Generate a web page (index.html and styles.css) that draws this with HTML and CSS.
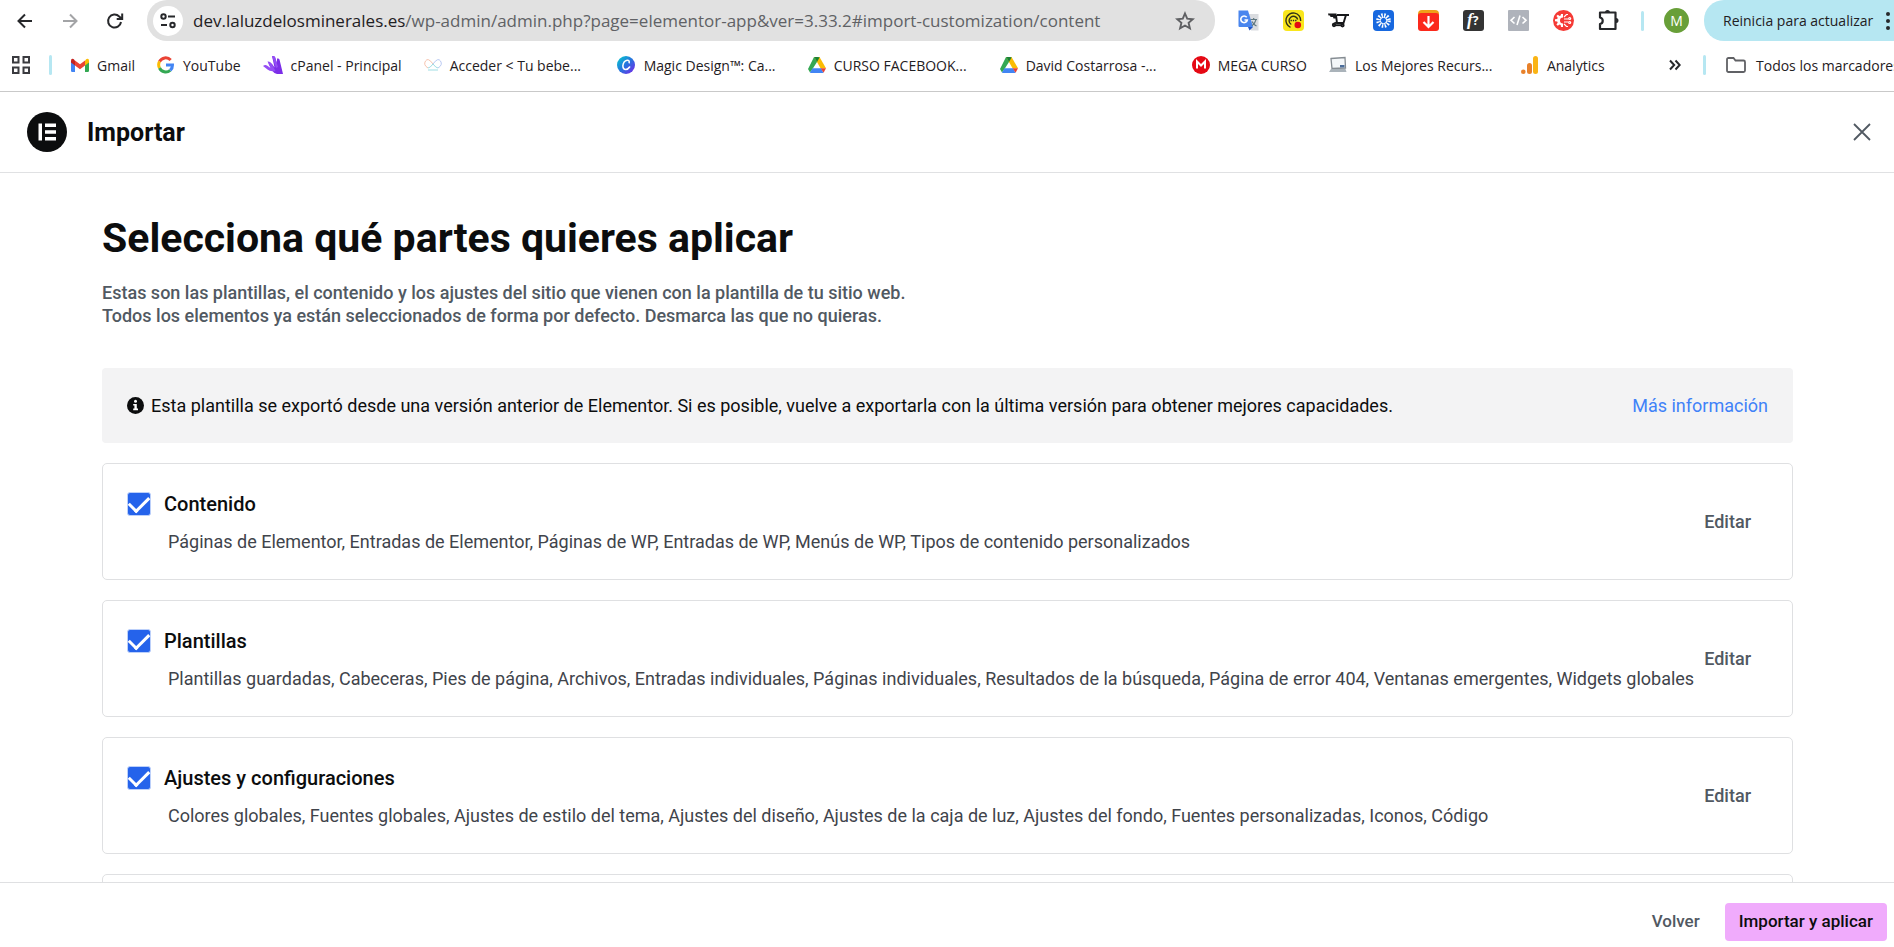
FILE: index.html
```html
<!DOCTYPE html>
<html lang="es">
<head>
<meta charset="utf-8">
<title>Importar</title>
<link rel="stylesheet" href="styles.css">
</head>
<body>
<svg class="defs" aria-hidden="true">
  <symbol id="drive" viewBox="0 0 18 16">
    <path fill="#34a853" d="M6 0h3.200L12 5 9 5 4.500 12 2 15.500 0 12Z"/>
    <path fill="#fbbc04" d="M6.500 0h5L18 11.200h-5.500L9 5Z"/>
    <path fill="#188038" d="M6.500 0H9L11.700 .3 9 5Z"/>
    <path fill="#4285f4" d="M4.600 11.200h8.600L15.500 16H2.500L2 15.400Z"/>
    <path fill="#ea4335" d="M12.700 11.200H18L15.600 15.700Z"/>
  </symbol>
</svg>

<header class="browser">
  <div class="toolbar">
    <button class="nav" aria-label="Atrás"><svg width="20" height="20" viewBox="0 0 20 20" fill="none" stroke="#27282b" stroke-width="2"><path d="M17 10H4M10 3.500 3.500 10 10 16.500"/></svg></button>
    <button class="nav" aria-label="Adelante"><svg width="20" height="20" viewBox="0 0 20 20" fill="none" stroke="#a3a4a6" stroke-width="2"><path d="M3 10h13M10 3.500 16.500 10 10 16.500"/></svg></button>
    <button class="nav" aria-label="Recargar"><svg width="20" height="20" viewBox="0 0 20 20" fill="none" stroke="#27282b" stroke-width="2"><path d="M16 11a6.500 6.500 0 1 1-1.800-5.500L17 8M17.200 2.500V8h-5.500"/></svg></button>
    <div class="address">
      <button class="site" aria-label="Información del sitio"><svg width="16" height="16" viewBox="0 0 16 16" fill="none" stroke="#27282b" stroke-width="2"><circle cx="3.500" cy="3.500" r="2.200"/><path d="M8 3.500h7M1 12h6"/><circle cx="12.500" cy="12" r="2.200"/></svg></button>
      <span class="url">dev.laluzdelosminerales.es<span class="path">/wp-admin/admin.php?page=elementor-app&amp;ver=3.33.2#import-customization/content</span></span>
      <button class="star" aria-label="Añadir a marcadores"><svg width="20" height="20" viewBox="0 0 20 20" fill="none" stroke="#5f6063" stroke-width="1.900"><path d="m10 2.500 2.200 5.200 5.600.5-4.200 3.700 1.300 5.500L10 14.500l-4.900 2.900 1.300-5.500L2.200 8.200l5.600-.5Z"/></svg></button>
    </div>
    <div class="extensions">
      <button aria-label="Traductor"><svg viewBox="0 0 21 21"><path fill="#dadce0" d="M9 4h11.500v16.500H13Z"/><path fill="#4a86ee" d="M.5.500H10L15 17H1.500Q.5 17 .5 16Z"/><path fill="#2457c5" d="M10 17h5l-3.500 3.500Z"/><path d="M8.700 7.300A3.300 3.300 0 1 0 9.300 10H6.500" fill="none" stroke="#fff" stroke-width="1.600"/><path d="M12.500 9.500H19M15.700 8v1.500M18 9.700q-1 4-4 6M14 11.500q1.500 3 4.500 4.500" fill="none" stroke="#5f7780" stroke-width="1.200"/></svg></button>
      <button aria-label="Captura"><svg viewBox="0 0 21 21"><rect width="21" height="21" rx="4" fill="#f9e61c"/><g fill="none" stroke="#303018" stroke-width="1.400"><path d="M7.500 17.300A7.400 7.400 0 1 1 17.700 11"/><path d="M8.300 14.500A4.400 4.400 0 1 1 14.700 9.500"/></g><path d="M7.500 10.500h6" stroke="#303018" stroke-width="1.400" stroke-dasharray="1.400 .9"/><circle cx="14.800" cy="15" r="3.300" fill="#e30b13"/></svg></button>
      <button aria-label="Carrito"><svg viewBox="0 0 21 21"><path fill="#17181a" d="M0 3.500h8.500l.5 5H5.500L5 7H2.500L2 5.500H.5Z"/><g fill="none" stroke="#17181a" stroke-width="1.900"><path d="M8 5 9 13h6.500L18 5h3M9 5h8.500M8 12.500 5.500 14"/><circle cx="6" cy="15" r="1.200"/><circle cx="14.500" cy="15.300" r="1.200"/><path d="M7 15.200h6"/></g></svg></button>
      <button aria-label="Destello"><svg viewBox="0 0 21 21"><rect width="21" height="21" rx="4" fill="#1768df"/><g fill="none" stroke="#fff"><circle cx="10.500" cy="10.500" r="3.200" stroke-width="1"/><circle cx="10.500" cy="10.500" r="5.200" stroke-width="4.200" stroke-dasharray="1.400 1.323"/></g></svg></button>
      <button aria-label="Descargas"><svg viewBox="0 0 21 21"><rect width="21" height="20" rx="4" fill="#f0a018"/><rect y="3" width="21" height="18" rx="3" fill="#fb291c"/><path d="M10.500 6v11M5.500 12l5 5 5-5" fill="none" stroke="#fff" stroke-width="2.200"/></svg></button>
      <button aria-label="Fuentes"><svg viewBox="0 0 21 21"><rect width="21" height="21" rx="3" fill="#343434"/><text x="4" y="15" class="fx">f<tspan class="mark">?</tspan></text></svg></button>
      <button aria-label="Código"><svg viewBox="0 0 21 21"><rect width="21" height="21" rx="1" fill="#afb3bb"/><path d="M6.500 7 3 10.300l3.500 3.200M14.500 7 18 10.300l-3.500 3.200M12 5.500 9 15" fill="none" stroke="#fff" stroke-width="1.600"/></svg></button>
      <button aria-label="Circuito"><svg viewBox="0 0 21 21"><circle cx="10.500" cy="10.500" r="10.500" fill="#f53b36"/><path fill="#fff" d="M10 4v3.500a3 3 0 0 0 0 6V17H8l-.3-2-1.200-.5-1.700 1.300-1.400-1.400 1.300-1.700L4.200 11.500 2 11.200V9.300L4.200 9l.5-1.200L3.400 6.100l1.400-1.400L6.500 6l1.200-.5L8 4Z"/><g fill="none" stroke="#fff" stroke-width="1.200"><path d="M11 9h4.500M11 12h4.500M11 7l2.500-2.500H15M11 14l2.500 2.500H15"/><circle cx="16.700" cy="8.500" r="1"/><circle cx="16.700" cy="12.500" r="1"/></g></svg></button>
      <button aria-label="Extensiones"><svg viewBox="0 0 21 21"><path fill="none" stroke="#27282b" stroke-width="2.200" stroke-linejoin="round" d="M2 2.500h15.500v16.500H2v-5a3.300 3.300 0 0 0 0-6.500Z"/><path fill="#27282b" d="M7 2.500a2.500 2.500 0 0 1 5 0ZM18 8a2.500 2.500 0 0 1 0 5Z"/></svg></button>
    </div>
    <span class="divider"></span>
    <button class="avatar">M</button>
    <button class="update">Reinicia para actualizar <svg width="6" height="20" viewBox="0 0 6 20" fill="#27282b"><circle cx="3" cy="3" r="2"/><circle cx="3" cy="10" r="2"/><circle cx="3" cy="17" r="2"/></svg></button>
  </div>

  <nav class="bookmarks" aria-label="Marcadores">
    <button class="apps" aria-label="Aplicaciones"><svg width="18" height="18" viewBox="0 0 18 18" fill="none" stroke="#3a3b3f" stroke-width="2"><path d="M1 1h5.500v5.500H1ZM11.500 1H17v5.500h-5.500ZM1 11.500h5.500V17H1ZM11.500 11.500H17V17h-5.500Z"/></svg></button>
    <span class="divider"></span>
    <div class="links">
      <a href="#"><svg viewBox="0 0 18 18"><path fill="#4285f4" d="M0 5l4 3v8H1.200Q0 16 0 14.800Z"/><path fill="#34a853" d="M14 8l4-3v9.800q0 1.200-1.200 1.200H14Z"/><path fill="#fbbc04" d="M14 4.500 15.500 3Q18 2 18 4.700V6.500L14 9.500Z"/><path fill="#ea4335" d="M4 4.500 9 8.200l5-3.700v5L9 13.200 4 9.500Z"/><path fill="#c5221f" d="M0 4.700Q0 2 2.500 3L4 4.500v5L0 6.500Z"/></svg>Gmail</a>
      <a href="#"><svg viewBox="0 0 18 18" fill="none" stroke-width="3"><path stroke="#ea4335" d="M2.500 5.500A7 7 0 0 1 13.700 4"/><path stroke="#fbbc04" d="M2.500 5.500a7 7 0 0 0 0 6.500"/><path stroke="#34a853" d="M2.500 12a7 7 0 0 0 10.700 2.400"/><path stroke="#4285f4" d="M13.200 14.400A7 7 0 0 0 15.500 9H9"/></svg>YouTube</a>
      <a href="#"><svg class="wide" viewBox="0 0 20 18"><path fill="#7c2ee8" d="M9 0q2-.5 3 1l2 6V2.500q2-.5 2.500 1L20 18h-6Q11 17.500 9.500 15L5.500 7.500q2.500-1 4 1l2 3Z"/><path fill="#944df5" d="M9 0q2-.5 3 1l3 10-2 1Z"/><path fill="#944df5" d="M4.500 5.500q2.500-.5 4 2l4 7.500Q7 16 4.500 13.500L0 10q2-1.500 4-.500L7.500 12Z"/></svg>cPanel - Principal</a>
      <a class="cut" href="#"><svg viewBox="0 0 18 18" fill="none" stroke-width="1"><path stroke="#f6c3ae" d="M9 8Q4 1 1.500 5T4 12"/><path stroke="#b9c9f2" d="M9 8q5-7 7.500-3T14 12"/><path stroke="#9fdde3" d="M4 12q2 0 5-4 3 4 5 4M4 14h10"/></svg><span>Acceder &lt; Tu bebe...</span></a>
      <a class="cut" href="#"><svg class="wide" viewBox="0 0 20 20"><defs><linearGradient id="cg" x1="0" y1="0" x2="1" y2="1"><stop offset=".1" stop-color="#08bfd0"/><stop offset=".5" stop-color="#2872de"/><stop offset="1" stop-color="#7d22ea"/></linearGradient></defs><circle cx="10" cy="10" r="10" fill="url(#cg)"/><path d="M13.500 7.500Q14 4.500 11.300 4.700 7 5.500 6.500 11q.2 4 3.300 4 2.500-.2 4.200-2.800" fill="none" stroke="#fff" stroke-width="1.700" stroke-linecap="round"/></svg><span>Magic Design™: Ca...</span></a>
      <a class="cut" href="#"><svg><use href="#drive"/></svg><span>CURSO FACEBOOK...</span></a>
      <a class="cut" href="#"><svg><use href="#drive"/></svg><span>David Costarrosa -...</span></a>
      <a href="#"><svg viewBox="0 0 18 18"><circle cx="9" cy="9" r="9" fill="#e50914"/><path d="M5 12.500v-7l4 4 4-4v7" fill="none" stroke="#fff" stroke-width="2"/></svg>MEGA CURSO</a>
      <a class="cut" href="#"><svg viewBox="0 0 18 18"><path fill="#f4f7f9" stroke="#858c92" stroke-width="1.300" d="M2 2.500 16 1.500 16.500 12 3 12.500Z"/><path fill="#aab3ba" d="M2 13h14.500l1 3H0Z"/><path fill="#4c6e9b" d="M11 9h4.500v2.500H11Z"/></svg><span>Los Mejores Recurs...</span></a>
      <a href="#"><svg viewBox="0 0 18 18"><rect x="12" width="5" height="18" rx="2.500" fill="#fab415"/><rect x="6" y="7" width="5" height="11" rx="2.500" fill="#e8812a"/><circle cx="2.300" cy="15.700" r="2.300" fill="#e8812a"/></svg>Analytics</a>
    </div>
    <button class="more" aria-label="Más marcadores"><svg width="12" height="12" viewBox="0 0 12 12" fill="none" stroke="#27282b" stroke-width="2"><path d="m1 1.500 4.200 4.500L1 10.500M6.500 1.500 10.700 6l-4.200 4.500"/></svg></button>
    <span class="divider"></span>
    <a class="all" href="#"><svg class="wide" viewBox="0 0 20 16" fill="none" stroke="#606165" stroke-width="1.800"><path d="M1 2.500Q1 1 2.500 1h5l2 2.500H17.500q1.500 0 1.500 1.500v8.500Q19 15 17.500 15h-15Q1 15 1 13.500Z"/></svg>Todos los marcadores</a>
  </nav>
</header>

<header class="app-header">
  <svg class="logo" viewBox="0 0 40 40"><circle cx="20" cy="20" r="20" fill="#0c0d0e"/><path fill="#fff" d="M11.500 11.500H15v17h-3.500ZM18 11.500h11V15H18ZM18 18.300h11v3.400H18ZM18 25h11v3.500H18Z"/></svg>
  <h2>Importar</h2>
  <button class="close" aria-label="Cerrar"><svg width="18" height="18" viewBox="0 0 18 18" fill="none" stroke="#515962" stroke-width="1.800"><path d="m1 1 16 16M17 1 1 17"/></svg></button>
</header>

<main class="content">
  <h1>Selecciona qué partes quieres aplicar</h1>
  <p class="intro">Estas son las plantillas, el contenido y los ajustes del sitio que vienen con la plantilla de tu sitio web.<br>Todos los elementos ya están seleccionados de forma por defecto. Desmarca las que no quieras.</p>

  <div class="notice">
    <svg width="17" height="17" viewBox="0 0 17 17"><circle cx="8.500" cy="8.500" r="8.500" fill="#0c0d0e"/><circle cx="8.500" cy="4.300" r="1.500" fill="#fff"/><path fill="#fff" d="M6.200 7h3.600v4.600h1.200v1.600H6.200v-1.600h1.200v-3H6.200Z"/></svg>
    <p>Esta plantilla se exportó desde una versión anterior de Elementor. Si es posible, vuelve a exportarla con la última versión para obtener mejores capacidades.</p>
    <a href="#">Más información</a>
  </div>

  <section class="card">
    <div class="info">
      <label><input type="checkbox" checked>Contenido</label>
      <p>Páginas de Elementor, Entradas de Elementor, Páginas de WP, Entradas de WP, Menús de WP, Tipos de contenido personalizados</p>
    </div>
    <button>Editar</button>
  </section>
  <section class="card">
    <div class="info">
      <label><input type="checkbox" checked>Plantillas</label>
      <p>Plantillas guardadas, Cabeceras, Pies de página, Archivos, Entradas individuales, Páginas individuales, Resultados de la búsqueda, Página de error 404, Ventanas emergentes, Widgets globales</p>
    </div>
    <button>Editar</button>
  </section>
  <section class="card">
    <div class="info">
      <label><input type="checkbox" checked>Ajustes y configuraciones</label>
      <p>Colores globales, Fuentes globales, Ajustes de estilo del tema, Ajustes del diseño, Ajustes de la caja de luz, Ajustes del fondo, Fuentes personalizadas, Iconos, Código</p>
    </div>
    <button>Editar</button>
  </section>
  <section class="card next"></section>
</main>

<footer class="actions">
  <button class="back">Volver</button>
  <button class="primary">Importar y aplicar</button>
</footer>
</body>
</html>
```
FILE: styles.css
```css
* { box-sizing: border-box; }

body {
  margin: 0;
  height: 100vh;
  display: flex;
  flex-direction: column;
  overflow: hidden;
  background: #fff;
  color: #0c0d0e;
  font-family: Roboto, sans-serif;
}

h1, h2, p { margin: 0; }

button {
  margin: 0;
  padding: 0;
  border: 0;
  background: none;
  color: inherit;
  font: inherit;
  cursor: pointer;
}

a { color: inherit; text-decoration: none; }
svg { display: block; flex: none; }
.defs { position: absolute; width: 0; height: 0; }

/* Browser chrome */
.browser {
  flex: none;
  border-bottom: 1px solid #c9c9c9;
  color: #1f2023;
  font-family: "Open Sans", "Noto Sans", sans-serif;
  font-size: 14px;
  white-space: nowrap;
  overflow: hidden;
}

.toolbar {
  display: flex;
  align-items: center;
  height: 41px;
  padding-left: 14px;
}

.toolbar > * { flex: none; }
.nav { width: 22px; margin-right: 23px; }
.nav svg { margin: 0 auto; }

.toolbar .address {
  flex: 1;
  display: flex;
  align-items: center;
  height: 41px;
  margin-left: -2px;
  padding: 0 20px 0 6px;
  border-radius: 20px;
  background: #e1e1e1;
}

.site {
  display: grid;
  place-items: center;
  width: 30px;
  height: 30px;
  border-radius: 50%;
  background: #fff;
}

.url { flex: 1; margin-left: 10px; font-size: 17px; line-height: 24px; }
.path { color: #606165; }

.extensions { display: flex; gap: 24px; margin: 0 22px 0 23px; }
.extensions svg { width: 21px; height: 21px; }
.fx { fill: #fff; font: italic bold 17px "Liberation Serif", serif; }
.mark { font: bold 12px "Open Sans", sans-serif; }

.divider {
  flex: none;
  width: 3px;
  height: 20px;
  border-radius: 2px;
  background: #b6e7f2;
}

.avatar {
  width: 25px;
  height: 25px;
  margin: 0 15px 0 20px;
  border-radius: 50%;
  background: #689f38;
  color: #fff;
  line-height: 25px;
}

.update {
  display: flex;
  align-items: center;
  justify-content: space-between;
  width: 190px;
  height: 41px;
  padding: 0 3px 0 19px;
  border-radius: 20px 0 0 20px;
  background: #b6e7f2;
}

.bookmarks {
  display: flex;
  align-items: center;
  height: 50px;
  padding: 0 0 2px 12px;
}

.apps { margin-right: 19px; }
.links { flex: 1; display: flex; align-items: center; margin-left: 19px; }

.bookmarks a {
  flex: none;
  display: flex;
  align-items: center;
  gap: 8px;
  margin-right: 22px;
}

.bookmarks a.cut { width: 170px; }
.bookmarks a svg { width: 18px; height: 18px; }
.bookmarks a svg.wide { width: 20px; }
.more { margin-right: 22px; }
.bookmarks a.all { width: 168px; gap: 10px; margin: 0 0 0 20px; }

/* App header */
.app-header {
  flex: none;
  display: flex;
  align-items: center;
  height: 81px;
  padding: 0 23px 0 27px;
  border-bottom: 1px solid #e0e1e3;
}

.logo { width: 40px; height: 40px; }
.app-header h2 { flex: 1; margin-left: 20px; font-size: 25px; font-weight: 700; }

/* Page body */
.content {
  flex: 1;
  min-height: 0;
  overflow: hidden;
  padding: 41px 101px 0 102px;
}

.content h1 { font-size: 41px; line-height: 48px; font-weight: 700; }

.intro {
  margin: 19px 0 41px;
  color: #515962;
  font-size: 18px;
  font-weight: 500;
  line-height: 23px;
}

.notice {
  display: flex;
  align-items: center;
  height: 75px;
  margin-bottom: 20px;
  padding: 0 25px;
  border-radius: 4px;
  background: #f3f3f4;
  font-size: 18px;
}

.notice p { flex: 1; margin-left: 7px; }
.notice a { color: #3f82f8; }

.card {
  display: flex;
  align-items: center;
  margin-bottom: 20px;
  padding: 28px 41px 25px 24px;
  border: 1px solid #dfe0e2;
  border-radius: 5px;
}

.info { flex: 1; white-space: nowrap; }

.card label {
  display: flex;
  align-items: center;
  gap: 13px;
  font-size: 20px;
  font-weight: 500;
  line-height: 24px;
}

.card input {
  appearance: none;
  display: grid;
  place-items: center;
  width: 24px;
  height: 24px;
  margin: 0;
  border: 1px solid #bcd0fa;
  border-radius: 3px;
  background: #2563eb;
}

.card input::before {
  content: "";
  width: 17px;
  height: 9px;
  margin-bottom: 5px;
  border: solid #fff;
  border-width: 0 0 3px 3px;
  rotate: -45deg;
}

.card p {
  margin: 14px 0 0 41px;
  color: #3f444b;
  font-size: 18px;
  line-height: 24px;
}

.card button { padding-bottom: 4px; color: #515962; font-size: 18px; font-weight: 500; }
.next { height: 117px; }

/* Bottom action bar */
.actions {
  flex: none;
  display: flex;
  justify-content: flex-end;
  align-items: center;
  gap: 25px;
  padding: 20px 7px 6px;
  border-top: 1px solid #dfe0e2;
  font-size: 17px;
  font-weight: 500;
}

.actions button { height: 38px; padding-bottom: 2px; }
.back { color: #515962; }

.primary {
  padding: 0 14px;
  border-radius: 4px;
  background: #f0abfc;
}
```
